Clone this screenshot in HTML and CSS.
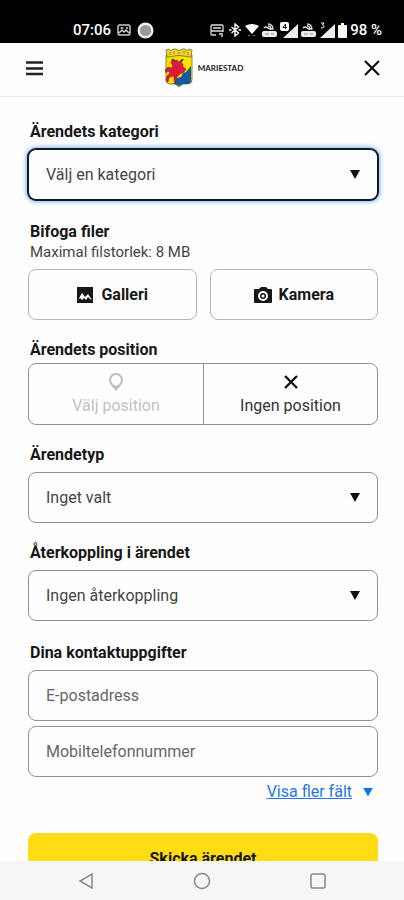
FILE: index.html
```html
<!DOCTYPE html>
<html lang="sv">
<head>
    <meta charset="UTF-8">
    <meta name="viewport" content="width=device-width, initial-scale=1.0">
    <title>Mariestad</title>
    <link rel="stylesheet" href="styles.css">
</head>
<body>
    <div class="status-bar">
        <div class="status-group">
            <span>07:06</span>
            <svg width="14" height="12" viewBox="0 0 14 12" fill="none" stroke="#ccc" stroke-width="1.5">
                <rect x="1" y="1" width="12" height="10" rx="1.5"/>
                <path d="M2 9l3-3 2 2 2-2 3 3M3.500 4h3M9 4h2"/>
            </svg>
            <svg class="status-dot" width="17" height="17" viewBox="0 0 17 17">
                <circle cx="8.500" cy="8.500" r="6.800" fill="#999" stroke="#eee" stroke-width="2.400"/>
            </svg>
        </div>
        <div class="status-group status-right">
            <svg width="16" height="13" viewBox="0 0 14 13" fill="none" stroke="#ddd" stroke-width="1.300">
                <path d="M6 11H2a1 1 0 0 1-1-1V2a1 1 0 0 1 1-1h10a1 1 0 0 1 1 1v6M1 7h12M3 4h8M9 10h4M11 12h2"/>
            </svg>
            <svg width="14" height="14" viewBox="0 0 12 14" fill="none" stroke="#fff" stroke-width="1.400">
                <path d="M2.500 4l7 6L6 13V1l3.500 3-7 6M0 7h2.500M9.500 7H12"/>
            </svg>
            <svg width="14" height="14" viewBox="0 0 14 14" fill="#fff">
                <path d="M0 3Q7-1 14 3L7 11z"/>
                <path d="M3 12h2v1H3zM8 12h2v1H8z" fill="#777"/>
            </svg>
            <svg width="15" height="14" viewBox="0 0 15 14">
                <path d="M2 8h11a2 2 0 0 1 2 2v2a2 2 0 0 1-2 2H2a2 2 0 0 1-2-2v-2a2 2 0 0 1 2-2z" fill="#eee"/>
                <path d="M3 11h4M9 11h3" stroke="#888"/>
                <path d="M2 5q2-2 4 0t5 0M6 1q5 0 5 6M6 3q3 0 3 4" fill="none" stroke="#ddd" stroke-width="1.300"/>
            </svg>
            <svg width="18" height="17" viewBox="0 0 18 17">
                <path d="M18 2v14H3z" fill="#eee"/>
                <rect width="9" height="9" rx="2" fill="#fff"/>
                <path d="M5.500 7V2L3 5.500h4" fill="none" stroke="#222"/>
            </svg>
            <svg width="15" height="14" viewBox="0 0 15 14">
                <path d="M2 8h11a2 2 0 0 1 2 2v2a2 2 0 0 1-2 2H2a2 2 0 0 1-2-2v-2a2 2 0 0 1 2-2z" fill="#eee"/>
                <path d="M3 11h4M9 11h3" stroke="#888"/>
                <path d="M2 5q2-2 4 0t5 0M6 1q5 0 5 6M6 3q3 0 3 4" fill="none" stroke="#ddd" stroke-width="1.300"/>
            </svg>
            <svg width="16" height="17" viewBox="0 0 16 17">
                <path d="M16 2v14H1z" fill="#eee"/>
                <path d="M2 1h3L3.500 3Q5 3 5 4.500T2 6" fill="none" stroke="#fff"/>
            </svg>
            <svg width="9" height="15" viewBox="0 0 9 15" fill="#fff">
                <path d="M3 0h3v2h2a1 1 0 0 1 1 1v11a1 1 0 0 1-1 1H1a1 1 0 0 1-1-1V3a1 1 0 0 1 1-1h2z"/>
            </svg>
            <span>98 %</span>
        </div>
    </div>

    <header class="top-bar">
        <button class="icon-button" type="button" aria-label="Meny">
            <svg width="18" height="16" viewBox="0 0 18 16" fill="none" stroke="#222" stroke-width="2.500">
                <path d="M0 2.500h17M0 8.500h17M0 14h17"/>
            </svg>
        </button>
        <div class="logo">
            <svg width="28" height="40" viewBox="0 0 28 40">
                <path d="M1 7h26v25q0 4-4 4h-5l-4 3-4-3H5q-4 0-4-4z" fill="#ffe000" stroke="#6f6a30" stroke-width=".8"/>
                <path d="M26 18v14q0 4-4 4h-4l-4 2-4-2H8l4-6 4-1 2-4 3-1z" fill="#1559a5"/>
                <path d="M7 11l2 2 3-1 2 2 3-3-1 4 2 1v3l3 2-2 3-4 2-3 3-1 5-2-1v-4l-2-1-3 2-1 4-2-1 1-5 3-3-2-2-2 2-1-3 3-3 3 1 2-2-2-3z" fill="#dc1937" stroke="#7b2028" stroke-width=".5"/>
                <path d="M8 11l2 2M18 11l-2 3" stroke="#175f3a" stroke-width="1.500"/>
                <path d="M1 2l3-1 2 2 2-2h3l3 2 3-2h3l2 2 2-2 3 1-1 7q-12-3-24 0z" fill="#efd331" stroke="#77702b" stroke-width=".8"/>
                <path d="M5 4v3M9 3v3M14 4v2M19 3v3M23 4v3" stroke="#9b902d"/>
            </svg>
            <span class="logo-name">MARIESTAD</span>
        </div>
        <button class="icon-button" type="button" aria-label="Stäng">
            <svg width="16" height="16" viewBox="0 0 16 16" fill="none" stroke="#111" stroke-width="2.200">
                <path d="M1 1l14 14M15 1L1 15"/>
            </svg>
        </button>
    </header>

    <main class="content">
        <form>
            <div class="form-group wide">
                <label class="title" for="category">Ärendets kategori</label>
                <div class="select-box">
                    <select class="control active" id="category" name="category">
                        <option>Välj en kategori</option>
                    </select>
                </div>
            </div>

            <div class="form-group">
                <h2 class="title">Bifoga filer</h2>
                <p class="hint">Maximal filstorlek: 8 MB</p>
                <div class="file-buttons">
                    <button class="control file-button" type="button">
                        <svg width="18" height="18" viewBox="0 0 18 18">
                            <path d="M1 1h16v16H1z" fill="#171717"/>
                            <path d="M2 14l4-7 3 4 3-3 4 6-2-1-2-2-2 3-2-2-2 2-2-2z" fill="#fff"/>
                        </svg>
                        Galleri
                    </button>
                    <button class="control file-button" type="button">
                        <svg width="18" height="18" viewBox="0 0 18 18">
                            <path d="M1 3h4l2-2h5l2 2h3q1 0 1 1v12q0 1-1 1H1q-1 0-1-1V4q0-1 1-1z" fill="#171717"/>
                            <circle cx="9" cy="10" r="4" fill="#171717" stroke="#fff" stroke-width="2"/>
                            <circle cx="9" cy="10" r="1.500" fill="#fff"/>
                        </svg>
                        Kamera
                    </button>
                </div>
            </div>

            <div class="form-group">
                <h2 class="title tight">Ärendets position</h2>
                <div class="segments">
                    <button class="segment" type="button" disabled>
                        <svg width="16" height="20" viewBox="0 0 16 20">
                            <path d="M8 2a6 6 0 0 0-6 6c0 3.500 3.500 6.500 6 9.500 2.500-3 6-6 6-9.500a6 6 0 0 0-6-6z" fill="none" stroke="#bdbdbd" stroke-width="2"/>
                            <path d="M4 12q4 3 8 0l-4 6z" fill="#bdbdbd"/>
                        </svg>
                        Välj position
                    </button>
                    <button class="segment" type="button">
                        <svg width="16" height="20" viewBox="0 0 16 20" fill="none" stroke="#111" stroke-width="2.400">
                            <path d="M2 4l12 12M14 4L2 16"/>
                        </svg>
                        Ingen position
                    </button>
                </div>
            </div>

            <div class="form-group">
                <label class="title" for="type">Ärendetyp</label>
                <div class="select-box">
                    <select class="control" id="type" name="type">
                        <option>Inget valt</option>
                    </select>
                </div>
            </div>

            <div class="form-group wide">
                <label class="title" for="feedback">Återkoppling i ärendet</label>
                <div class="select-box">
                    <select class="control" id="feedback" name="feedback">
                        <option>Ingen återkoppling</option>
                    </select>
                </div>
            </div>

            <div class="contact">
                <h2 class="title">Dina kontaktuppgifter</h2>
                <input class="control" type="email" name="email" placeholder="E-postadress" aria-label="E-postadress">
                <input class="control" type="tel" name="phone" placeholder="Mobiltelefonnummer" aria-label="Mobiltelefonnummer">
                <div class="more">
                    <a href="#">Visa fler fält</a>
                </div>
            </div>

            <button class="submit" type="submit">Skicka ärendet</button>
        </form>
    </main>

    <nav class="system-nav">
        <svg width="16" height="18" viewBox="0 0 16 18" fill="none" stroke="#888" stroke-width="1.500">
            <path d="M14 2v14L2 9z"/>
        </svg>
        <svg width="18" height="18" viewBox="0 0 18 18" fill="none" stroke="#888" stroke-width="1.500">
            <circle cx="9" cy="9" r="7.500"/>
        </svg>
        <svg width="16" height="18" viewBox="0 0 16 18" fill="none" stroke="#888" stroke-width="1.500">
            <rect x="1" y="2" width="14" height="14" rx="2"/>
        </svg>
    </nav>
</body>
</html>
```

FILE: styles.css
```css
* {
    box-sizing: border-box;
}
body {
    display: flex;
    flex-direction: column;
    height: 100vh;
    margin: 0;
    background-color: #fefefe;
    color: #171717;
    font-family: Roboto, sans-serif;
    font-size: 16px;
    line-height: 20px;
}
button,
input,
select {
    font: inherit;
    color: inherit;
}
svg {
    display: block;
    flex: none;
}
.status-bar {
    display: flex;
    flex: none;
    justify-content: space-between;
    height: 43px;
    padding: 16px 22px 0 73px;
    background-color: #000;
    color: #fff;
    font-size: 15px;
    font-weight: 500;
}
.status-group {
    display: flex;
    align-items: center;
    height: 28px;
    gap: 6px;
}
.status-right {
    gap: 3px;
}
.top-bar {
    display: flex;
    flex: none;
    align-items: center;
    justify-content: space-between;
    height: 54px;
    padding: 0 24px 4px 26px;
    border-bottom: 1px solid #e8e8e8;
}
.icon-button {
    padding: 0;
    border: none;
    background: none;
    cursor: pointer;
}
.logo {
    display: flex;
    align-items: center;
    gap: 5px;
}
.logo-name {
    font-family: Lato, sans-serif;
    font-size: 8px;
    font-weight: 700;
}
.content {
    flex: 1;
    min-height: 0;
    overflow: hidden;
    padding: 25px 26px 0 28px;
}
.form-group {
    margin-bottom: 20px;
}
.wide {
    margin-bottom: 22px;
}
.title {
    display: block;
    margin: 0 0 7px;
    padding-left: 2px;
    font-size: 16px;
    font-weight: 700;
    line-height: 20px;
}
.tight {
    margin-bottom: 3px;
}
.hint {
    margin: -7px 0 7px;
    padding-left: 2px;
    color: #444;
    font-size: 15px;
}
.control {
    display: block;
    width: 100%;
    height: 51px;
    padding: 0 17px;
    border: 1px solid #929292;
    border-radius: 8px;
    background-color: #fefefe;
}
.select-box {
    display: grid;
    align-items: center;
}
.select-box select {
    grid-area: 1 / 1;
    appearance: none;
    color: #444;
}
.select-box::after {
    content: "";
    grid-area: 1 / 1;
    justify-self: end;
    z-index: 1;
    width: 10px;
    height: 9px;
    margin-right: 18px;
    background-color: #111;
    clip-path: polygon(0 0, 100% 0, 50% 100%);
    pointer-events: none;
}
.active {
    border-color: #10182b;
    box-shadow: 0 0 0 1px #10182b, 0 0 4px 2px #7fb2f5;
}
.file-buttons {
    display: grid;
    grid-template-columns: 1fr 1fr;
    gap: 13px;
}
.file-button {
    display: flex;
    align-items: center;
    justify-content: center;
    gap: 7px;
    border-color: #b5b5b5;
    font-weight: 700;
}
.segments {
    display: grid;
    grid-template-columns: 1fr 1fr;
    border: 1px solid #929292;
    border-radius: 8px;
}
.segment {
    display: flex;
    flex-direction: column;
    align-items: center;
    gap: 4px;
    height: 60px;
    padding: 8px 0;
    border: none;
    background: none;
    color: #333;
}
.segment + .segment {
    border-left: 1px solid #929292;
}
.segment:disabled {
    color: #c2c2c2;
}
.contact {
    margin-bottom: 31px;
}
.contact .control + .control {
    margin-top: 5px;
}
.contact ::placeholder {
    color: #666;
    opacity: 1;
}
.more {
    display: flex;
    align-items: center;
    justify-content: flex-end;
    gap: 11px;
    margin-top: 5px;
    padding-right: 5px;
}
.more a {
    color: #2478df;
}
.more::after {
    content: "";
    width: 10px;
    height: 9px;
    background-color: #0877f2;
    clip-path: polygon(0 0, 100% 0, 50% 100%);
}
.submit {
    display: block;
    width: 100%;
    height: 51px;
    border: none;
    border-radius: 8px;
    background-color: #ffdc14;
    font-weight: 700;
}
.system-nav {
    display: flex;
    flex: none;
    align-items: center;
    justify-content: space-between;
    height: 39px;
    padding: 0 78px;
    background-color: #f6f6f6;
}
```
